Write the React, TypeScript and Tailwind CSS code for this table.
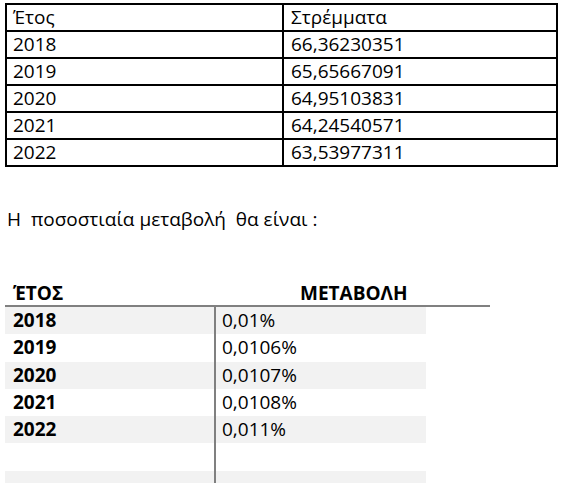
import React from 'react';

const areas = [
  { year: '2018', value: '66,36230351' },
  { year: '2019', value: '65,65667091' },
  { year: '2020', value: '64,95103831' },
  { year: '2021', value: '64,24540571' },
  { year: '2022', value: '63,53977311' },
];

const changes = [
  { year: '2018', value: '0,01%' },
  { year: '2019', value: '0,0106%' },
  { year: '2020', value: '0,0107%' },
  { year: '2021', value: '0,0108%' },
  { year: '2022', value: '0,011%' },
  { year: '', value: '' },
  { year: '', value: '' },
];

export default function App() {
  return (
    <div className="w-[581px] h-[483px] overflow-hidden bg-white text-black font-['Open_Sans',sans-serif] text-[19px] leading-[25px]">
      {/* Top table */}
      <table className="ml-[5px] mt-[3px] w-[553px] border-collapse">
        <tbody>
          <tr>
            <td className="w-[277px] h-[26px] border-2 border-black px-[6px] py-0 align-middle">Έτος</td>
            <td className="h-[26px] border-2 border-black px-[7px] py-0 align-middle">Στρέμματα</td>
          </tr>
          {areas.map((r) => (
            <tr key={r.year}>
              <td className="h-[27px] border-2 border-black px-[6px] py-0 align-middle">{r.year}</td>
              <td className="h-[27px] border-2 border-black px-[7px] py-0 align-middle">{r.value}</td>
            </tr>
          ))}
        </tbody>
      </table>

      <p className="ml-[7px] mt-[40px] whitespace-pre">Η  ποσοστιαία μεταβολή  θα είναι :</p>

      {/* Bottom table */}
      <div className="mt-[49px] ml-[5px]">
        <div className="flex w-[485px] h-[26px] items-center border-b-2 border-[#808080] font-bold">
          <span className="pl-[8px] w-[211px]">ΈΤΟΣ</span>
          <span className="pl-[84px]">ΜΕΤΑΒΟΛΗ</span>
        </div>
        {changes.map((r, i) => (
          <div
            key={i}
            className={`flex w-[421px] h-[27.3px] items-center ${i % 2 === 0 ? 'bg-[#f2f2f2]' : 'bg-white'}`}
          >
            <div className="w-[211px] h-full flex items-center pl-[8px] border-r-2 border-[#808080] font-bold">
              {r.year}
            </div>
            <div className="pl-[6px]">{r.value}</div>
          </div>
        ))}
      </div>
    </div>
  );
}
